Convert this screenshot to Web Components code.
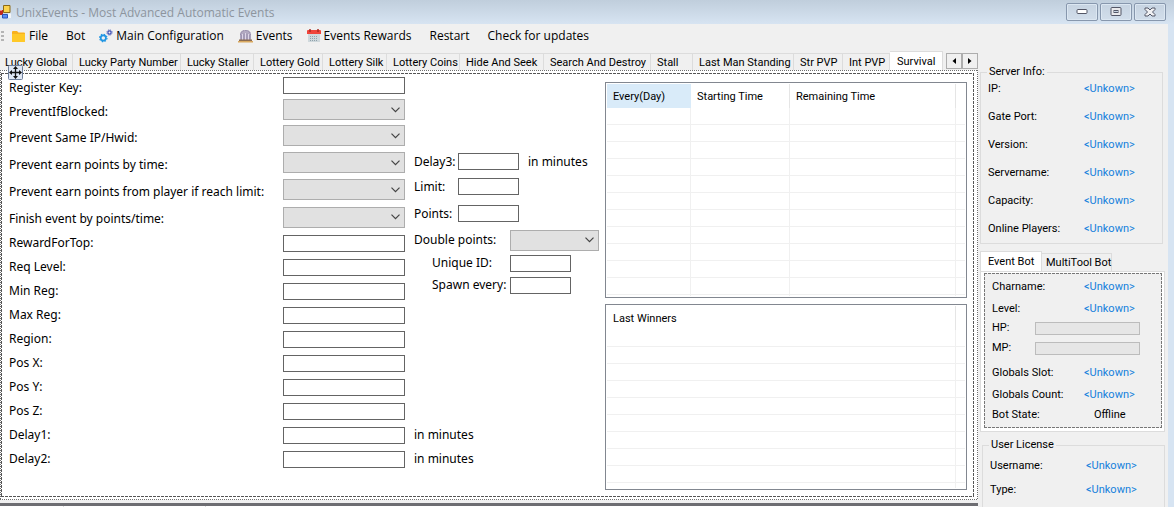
<!DOCTYPE html>
<html lang="en">
<head>
<meta charset="utf-8">
<title>UnixEvents - Most Advanced Automatic Events</title>
<style>
  html, body { margin: 0; height: 100%; overflow: hidden; background: #fff; }
  body {
    --ui: "Noto Sans", "Open Sans", sans-serif;
    --chrome: "Open Sans", "Noto Sans", sans-serif;
    --small: Roboto, "Liberation Sans", Arial, sans-serif;
    --face: #f0f0f0;
    --line: #dcdcdc;
    font: 12px/16px var(--ui);
    color: #000;
  }
</style>
</head>
<body>
<app-window>
  <title-bar slot="title">UnixEvents - Most Advanced Automatic Events</title-bar>

  <menu-strip slot="menu">
    <menu-entry icon="folder">File</menu-entry>
    <menu-entry>Bot</menu-entry>
    <menu-entry icon="gears">Main Configuration</menu-entry>
    <menu-entry icon="arcade">Events</menu-entry>
    <menu-entry icon="calendar">Events Rewards</menu-entry>
    <menu-entry>Restart</menu-entry>
    <menu-entry>Check for updates</menu-entry>
  </menu-strip>

  <event-tabs slot="main">
    <survival-form></survival-form>
    <list-view slot="lists" columns="Every(Day)|Starting Time|Remaining Time" widths="84|99|" rows="11" tail="1" hot="0"></list-view>
    <list-view slot="lists" columns="Last Winners" widths="" rows="9" tail="5"></list-view>
  </event-tabs>

  <group-box slot="side" caption="Server Info:" class="server">
    <info-row label="IP:">&lt;Unkown&gt;</info-row>
    <info-row label="Gate Port:">&lt;Unkown&gt;</info-row>
    <info-row label="Version:">&lt;Unkown&gt;</info-row>
    <info-row label="Servername:">&lt;Unkown&gt;</info-row>
    <info-row label="Capacity:">&lt;Unkown&gt;</info-row>
    <info-row label="Online Players:">&lt;Unkown&gt;</info-row>
  </group-box>

  <bot-panel slot="side"></bot-panel>

  <group-box slot="side" caption="User License" class="license">
    <info-row label="Username:">&lt;Unkown&gt;</info-row>
    <info-row label="Type:">&lt;Unkown&gt;</info-row>
  </group-box>
</app-window>

<script>
const define = (name, render) => customElements.define(name, class extends HTMLElement {
  connectedCallback() {
    if (this.shadowRoot) return;
    this.attachShadow({ mode: 'open' }).innerHTML = render(this);
  }
});

/* one-pixel selection outline drawn from four repeating gradients */
const outline = (color, on, period) => {
  const g = dir => `repeating-linear-gradient(${dir}, ${color} 0 ${on}px, transparent ${on}px ${period}px)`;
  return `background-image: ${g('90deg')}, ${g('90deg')}, ${g('180deg')}, ${g('180deg')};
    background-size: 100% 1px, 100% 1px, 1px 100%, 1px 100%;
    background-position: 0 0, 0 100%, 0 0, 100% 0;
    background-repeat: no-repeat;`;
};

const icons = {
  folder: `<svg width="14" height="14" viewBox="0 0 14 14"><path d="M0 3q0-1 1-1h4l1.500 1.500H12q1 0 1 1V12q0 1-1 1H1q-1 0-1-1z" fill="#f9b21d"/><path d="M0 5h13v7q0 1-1 1H1q-1 0-1-1z" fill="#ffc928"/></svg>`,
  gears: `<svg width="14" height="14" viewBox="0 0 14 14"><circle cx="4.300" cy="9" r="2.600" fill="none" stroke="#2196e3" stroke-width="1.700"/><circle cx="4.300" cy="9" r="3.700" fill="none" stroke="#2196e3" stroke-width="1.200" stroke-dasharray="1.450 1.450"/><circle cx="10.500" cy="3.500" r="1.600" fill="none" stroke="#3f51b5" stroke-width="1.200"/><circle cx="10.500" cy="3.500" r="2.600" fill="none" stroke="#3f51b5" stroke-width="1" stroke-dasharray="1.020 1.020"/></svg>`,
  arcade: `<svg width="15" height="14" viewBox="0 0 15 14"><path d="M2 11V6Q2 1 7.500 1T13 6v5z" fill="#b3aac2"/><path d="M2.500 6Q3 1.500 7.500 1.500T12.500 6" stroke="#9186a6" stroke-dasharray="1.500 .8" fill="none"/><path d="M4.500 11V5M7.500 11V4M10.500 11V5" stroke="#ddd5e8" stroke-width="1"/><path d="M3.300 11V6M6 11V4.500M9 11V4.500M11.800 11V6" stroke="#8d82a4" stroke-width=".7"/><path d="M1 10.500h13v1.500H1z" fill="#8b6b4f"/><path d="M0 12h15v1.500H0z" fill="#d9a95f"/></svg>`,
  calendar: `<svg width="14" height="14" viewBox="0 0 14 14"><path d="M1 4h12v8.500q0 .5-.5.500h-11q-.5 0-.5-.5z" fill="#cfd8dc"/><path d="M0 2q0-1 1-1h12q1 0 1 1v3H0z" fill="#f0443a"/><path d="M3 0v3M11 0v3" stroke="#a82a22" stroke-width="1.500"/><path d="M3 7.500h8M3 9.500h8M3 11.500h8" stroke="#8fa1ab" stroke-dasharray="1 1"/></svg>`
};

define('app-window', () => `
<style>
  :host { display: flex; flex-direction: column; height: 100vh; overflow: hidden; margin-right: 1px; background: #d7e4f2; }
  .client { flex: 1; min-height: 0; margin-right: 6px; background: var(--face); display: grid; grid-template: auto 1fr / minmax(0, 1fr) 190px; }
  .menu { grid-column: 1 / 3; }
  .side { display: flex; flex-direction: column; padding: 14px 3px 0 2px; font: 11px/14px var(--small); }
  ::slotted(.server) { margin-right: 2px; --gap: 14px; --pad: 3px; --edge: 7px; }
  ::slotted(.license) { margin: 6px 0 0 2px; --gap: 10px; --pad: 7px; --edge: 24px; }
</style>
<slot name="title"></slot>
<div class="client">
  <div class="menu"><slot name="menu"></slot></div>
  <main><slot name="main"></slot></main>
  <aside class="side"><slot name="side"></slot></aside>
</div>`);

define('title-bar', () => `
<style>
  :host { display: flex; align-items: center; height: 24px; background: linear-gradient(#c0cedc, #d7e4f2); color: #8d959e; font-family: var(--chrome); }
  .name { flex: 1; padding: 2px 0 0 5px; white-space: nowrap; }
  .buttons { display: flex; gap: 2px; padding-right: 8px; }
  button { width: 32px; height: 18px; padding: 0; border: 1px solid #8797ad; border-radius: 2px; background: linear-gradient(#c6d3e1, #d2deeb); box-shadow: inset 0 0 0 1px #dce7f2; display: grid; place-items: center; }
  svg { display: block; }
</style>
<svg width="11" height="14" viewBox="0 0 11 14" aria-hidden="true"><path d="M0 5h3v5H0z" fill="#c2281c"/><path d="M0 5h2v1H0z" fill="#e88"/><path d="M3.500.5h6.500v7H3.500z" fill="#fcd34d" stroke="#8c6a16"/><path d="M2.500 9.500h5v3.500h-5z" fill="#5c8df2" stroke="#2a55b8"/><path d="M8 8.500h3v4.500H8z" fill="#f3f5f8"/></svg>
<span class="name"><slot></slot></span>
<div class="buttons">
  <button aria-label="Minimize"><svg width="12" height="6"><rect x="1" y=".5" width="10" height="4" rx="1" fill="#fff" stroke="#535666"/></svg></button>
  <button aria-label="Maximize"><svg width="12" height="10"><rect x="1" y=".5" width="10" height="8" rx="1" fill="#e9e9ec" stroke="#535666"/><rect x="4" y="3.500" width="4" height="2" fill="#c6d3e1" stroke="#535666"/></svg></button>
  <button aria-label="Close"><svg width="12" height="10"><path d="M1 1h3l2 2 2-2h3v1.500L8.500 5 11 7.500V9H8L6 7 4 9H1V7.500L3.500 5 1 2.500z" fill="#f1f1f3" stroke="#535666"/></svg></button>
</div>`);

define('menu-strip', () => `
<style>
  :host { display: flex; align-items: center; gap: 14px; height: 24px; padding-bottom: 3px; font-family: var(--chrome); }
  .grip { width: 3px; height: 11px; margin: 0 -6px 0 1px; background: repeating-linear-gradient(#b4b4b4 0 2px, transparent 2px 4px); }
</style>
<span class="grip"></span><slot></slot>`);

define('menu-entry', el => `
<style>
  :host { display: block; }
  button { display: flex; align-items: center; gap: 3px; border: 0; padding: 0; background: none; color: inherit; font: inherit; white-space: nowrap; }
  button.plain { padding-left: 4px; }
  svg { display: block; }
</style>
<button class="${el.hasAttribute('icon') ? '' : 'plain'}">${icons[el.getAttribute('icon')] || ''}<span><slot></slot></span></button>`);

const tabNames = ['Lucky Global', 'Lucky Party Number', 'Lucky Staller', 'Lottery Gold', 'Lottery Silk', 'Lottery Coins', 'Hide And Seek', 'Search And Destroy', 'Stall', 'Last Man Standing', 'Str PVP', 'Int PVP', 'Survival'];

define('event-tabs', () => `
<style>
  :host { display: block; }
  .strip { display: flex; height: 19px; align-items: flex-end; justify-content: space-between; font: 11px/14px var(--small); position: relative; }
  [role=tablist] { display: grid; grid-template-columns: 73px 108px 73px 69px 64px 73px 84px 107px 42px 101px 49px 47px 53px; align-items: end; }
  [role=tab] { height: 17px; box-sizing: border-box; border: 0; border-top: 1px solid var(--line); border-right: 1px solid var(--line); background: none; padding: 2px 0 0 6px; font: inherit; color: inherit; text-align: left; white-space: nowrap; }
  [role=tab]:first-child { padding-left: 5px; }
  [aria-selected=true] { height: 19px; background: #fff; padding: 1px 0 0 7px; }
  .spin { display: flex; padding-bottom: 1px; }
  .spin button { width: 16px; height: 16px; padding: 0; border: 1px solid #adadad; background: #f0f0f0; display: grid; place-items: center; }
  .page { padding: 3px 4px 3px 1px; background-color: #fff; ${outline('#6e6e6e', 1, 2)} }
  .inner { display: grid; grid-template-columns: 590px minmax(0, 1fr); gap: 6px; padding: 1px 7px 7px 8px; ${outline('#555', 3, 4)} }
  .lists { display: grid; gap: 6px; padding-top: 8px; align-content: start; }
  .next { margin-top: 3px; height: 10px; border-top: 3px solid #6d6d72; background: #fff; display: grid; grid-template-columns: 64px 142px 1fr; }
  .next i { border-right: 1px solid #dcdcdc; }
  .move { position: absolute; left: 8px; top: 14px; z-index: 1; }
</style>
<div class="strip">
  <div role="tablist">${tabNames.map(n => `<button role="tab" aria-selected="${n === 'Survival'}">${n}</button>`).join('')}</div>
  <div class="spin">
    <button aria-label="Scroll left"><svg width="6" height="8"><path d="M5 1v6L1.500 4z"/></svg></button>
    <button aria-label="Scroll right"><svg width="6" height="8"><path d="M1 1v6l3.500-3z"/></svg></button>
  </div>
  <svg class="move" width="15" height="15" viewBox="0 0 15 15" aria-hidden="true"><rect x=".5" y=".5" width="14" height="14" rx="1" fill="#dfe7f4" stroke="#6e7f9c"/><path d="M7.500 3v9M3 7.500h9" stroke="#111" stroke-width="1.300"/><path d="M7.500 1 10 4H5zM7.500 14 5 11h5zM1 7.500 4 5v5zM14 7.500 11 10V5z" fill="#111"/></svg>
</div>
<div class="page"><div class="inner">
  <slot></slot>
  <div class="lists"><slot name="lists"></slot></div>
</div></div>
<div class="next"><i></i><i></i></div>`);

define('survival-form', () => `
<style>
  :host { display: grid; grid-template-columns: 397px minmax(0, 1fr);
    grid-template-rows: 23px 25px 27px 27px 27px 28px repeat(10, 24px); }
  form-field { grid-column: 1; }
  form-field[unit] { grid-column: 1 / 3; }
  form-field[combo], form-field:first-of-type { --drop: 4px; }
  .extra { grid-column: 2; grid-row: 4 / 11; padding-left: 8px; display: grid; grid-template-rows: 25px 25px 29px 24px 22px 22px; align-content: start;
    --label: 44px; --box: 61px; }
  .extra form-field { grid-column: 1; --drop: 0px; }
  .wide { --label: 96px; --combo: 89px; }
  .extra .sub { padding-left: 18px; --label: 78px; }
</style>
<form-field label="Register Key:"></form-field>
<form-field label="PreventIfBlocked:" combo></form-field>
<form-field label="Prevent Same IP/Hwid:" combo></form-field>
<form-field label="Prevent earn points by time:" combo></form-field>
<form-field label="Prevent earn points from player if reach limit:" combo></form-field>
<form-field label="Finish event by points/time:" combo></form-field>
<form-field label="RewardForTop:"></form-field>
<form-field label="Req Level:"></form-field>
<form-field label="Min Reg:"></form-field>
<form-field label="Max Reg:"></form-field>
<form-field label="Region:"></form-field>
<form-field label="Pos X:"></form-field>
<form-field label="Pos Y:"></form-field>
<form-field label="Pos Z:"></form-field>
<form-field label="Delay1:" unit="in minutes"></form-field>
<form-field label="Delay2:" unit="in minutes"></form-field>
<div class="extra">
  <form-field label="Delay3:" unit="in minutes"></form-field>
  <form-field label="Limit:"></form-field>
  <form-field label="Points:"></form-field>
  <form-field class="wide" label="Double points:" combo></form-field>
  <form-field class="sub" label="Unique ID:"></form-field>
  <form-field class="sub" label="Spawn every:"></form-field>
</div>`);

define('form-field', el => `
<style>
  :host { display: flex; align-items: center; white-space: nowrap; }
  label { width: var(--label, 274px); flex: none; padding-top: var(--drop, 0); }
  input, select { flex: none; box-sizing: border-box; margin: 0; border-radius: 0; font: inherit; }
  input { width: var(--box, 122px); height: 17px; padding: 0 2px; border: 1px solid #646464; background: #fff; }
  select { appearance: none; width: var(--combo, 122px); height: 21px; border: 1px solid #adadad;
    background: #e1e1e1 url("data:image/svg+xml,%3Csvg xmlns='http://www.w3.org/2000/svg' width='9' height='6'%3E%3Cpath d='M.5 .7 4.500 4.700 8.500 .7' fill='none' stroke='%23444' stroke-width='1.200'/%3E%3C/svg%3E") no-repeat right 4px center; }
  span { padding-left: 9px; }
</style>
<label for="f">${el.getAttribute('label')}</label>
${el.hasAttribute('combo') ? '<select id="f"><option></option></select>' : '<input id="f" type="text">'}
${el.hasAttribute('unit') ? `<span>${el.getAttribute('unit')}</span>` : ''}`);

define('list-view', el => {
  const cols = el.getAttribute('columns').split('|');
  const widths = el.getAttribute('widths').split('|');
  const cells = '<td></td>'.repeat(cols.length + 1);
  return `
<style>
  :host { display: block; border: 1px solid #828790; padding: 1px; background: #fff; font: 11px/14px var(--small); }
  table { width: 100%; table-layout: fixed; border-collapse: separate; border-spacing: 0; }
  th, td { box-sizing: border-box; padding: 0; border-right: 1px solid #f0f0f0; }
  th { height: 24px; padding: 2px 0 0 6px; font-weight: normal; text-align: left; border-right-color: #e5e5e5; }
  th.hot { background: #d9ebf9; border-right-color: #d9ebf9; }
  td { height: 17px; border-bottom: 1px solid #f0f0f0; }
  thead td { border-bottom: 0; }
  .tail td { height: ${el.getAttribute('tail')}px; border-bottom: 0; }
  tr > :last-child { border-right: 0; }
</style>
<table>
  <colgroup>${cols.map((c, i) => `<col${widths[i] ? ` style="width:${widths[i]}px"` : ''}>`).join('')}<col style="width:9px"></colgroup>
  <thead><tr>${cols.map((c, i) => `<th scope="col" class="${el.getAttribute('hot') === String(i) ? 'hot' : ''}">${c}</th>`).join('')}<td></td></tr></thead>
  <tbody>${`<tr>${cells}</tr>`.repeat(+el.getAttribute('rows'))}<tr class="tail">${cells}</tr></tbody>
</table>`;
});

define('group-box', el => `
<style>
  :host { display: block; }
  fieldset { margin: 0; min-width: 0; border: 1px solid var(--line); padding: var(--pad) 0 var(--edge) 7px; }
  legend { padding: 0 2px; margin-left: -1px; }
  .rows { display: grid; gap: var(--gap); }
</style>
<fieldset><legend>${el.getAttribute('caption')}</legend><div class="rows"><slot></slot></div></fieldset>`);

define('info-row', el => `
<style>
  :host { display: grid; grid-template-columns: 96px 1fr; align-items: center; color: #1480dc; line-height: 14px; }
  .label { color: #000; }
</style>
<span class="label">${el.getAttribute('label')}</span><span><slot></slot></span>`);

define('bot-panel', () => `
<style>
  :host { display: block; margin-top: 7px; }
  [role=tablist] { display: flex; align-items: flex-end; height: 20px; }
  [role=tab] { box-sizing: border-box; height: 18px; width: 70px; border: 1px solid var(--line); border-width: 1px 1px 0 0; background: none; padding: 1px 0 0 4px; font: inherit; color: inherit; text-align: left; white-space: nowrap; }
  [aria-selected=true] { height: 20px; width: 62px; border-left-width: 1px; background: #fff; padding-left: 7px; }
  .panel { border: 1px solid var(--line); background: #fff; padding: 1px 2px 3px 3px; }
  .inner { display: grid; grid-template-rows: 24px 20px 20px 20px 28px 16px 24px; align-items: center; padding: 1px 0 2px 8px; background-color: var(--face); ${outline('#777', 3, 4)} }
  info-row { grid-template-columns: 92px 1fr; padding-top: 2px; }
  .bar { display: grid; grid-template-columns: 43px 1fr; align-items: center; padding-right: 22px; }
  progress { appearance: none; box-sizing: border-box; width: 100%; height: 13px; border: 1px solid #bcbcbc; background: #e6e6e6; }
  progress::-webkit-progress-bar { background: #e6e6e6; }
  .off { color: #000; padding-left: 10px; }
</style>
<div role="tablist"><button role="tab" aria-selected="true">Event Bot</button><button role="tab" aria-selected="false">MultiTool Bot</button></div>
<div class="panel"><div class="inner">
  <info-row label="Charname:">&lt;Unkown&gt;</info-row>
  <info-row label="Level:">&lt;Unkown&gt;</info-row>
  <div class="bar"><label for="hp">HP:</label><progress id="hp" value="0" max="100"></progress></div>
  <div class="bar"><label for="mp">MP:</label><progress id="mp" value="0" max="100"></progress></div>
  <info-row label="Globals Slot:">&lt;Unkown&gt;</info-row>
  <info-row label="Globals Count:">&lt;Unkown&gt;</info-row>
  <info-row label="Bot State:"><span class="off">Offline</span></info-row>
</div></div>`);
</script>
</body>
</html>
